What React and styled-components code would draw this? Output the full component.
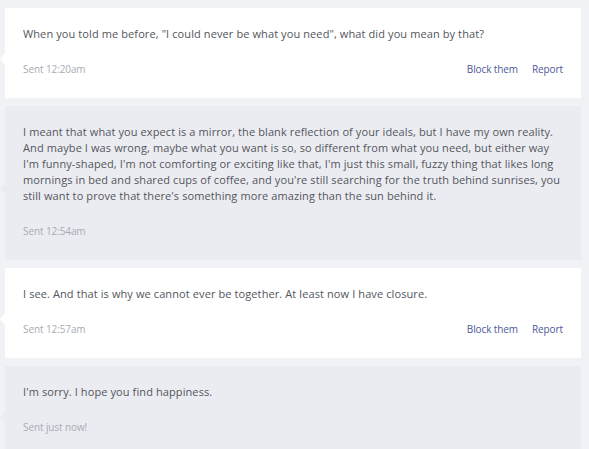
import React from "react";
import styled, { createGlobalStyle } from "styled-components";

const GlobalStyle = createGlobalStyle`
  html, body {
    margin: 0;
    padding: 0;
    background: #f1f2f6;
    font-family: "Open Sans", "Liberation Sans", sans-serif;
  }
`;

const Thread = styled.div`
  display: flex;
  flex-direction: column;
  gap: 8px;
  padding: 8px 8px 0 5px;
`;

const Bubble = styled.div`
  position: relative;
  background-color: ${(props) => (props.mine ? "#ebecf1" : "#ffffff")};
  padding: 18px 18px 21px 18px;
  display: flex;
  flex-direction: column;
  &::before {
    content: "";
    position: absolute;
    left: -5px;
    top: 50%;
    border-top: 6px solid transparent;
    border-bottom: 6px solid transparent;
    border-right: 5px solid ${(props) => (props.mine ? "#ebecf1" : "#ffffff")};
  }
`;

const Text = styled.p`
  margin: 0;
  font-size: 11px;
  line-height: 16px;
  letter-spacing: 0.1px;
  color: #53565c;
`;

const Footer = styled.div`
  margin-top: 19px;
  display: flex;
  align-items: center;
  font-size: 10px;
  line-height: 16px;
`;

const Sent = styled.span`
  color: #a9abb5;
  letter-spacing: -0.1px;
`;

const Actions = styled.div`
  margin-left: auto;
  display: flex;
  gap: 14px;
`;

const Action = styled.a`
  color: #4d5799;
  cursor: pointer;
  letter-spacing: -0.1px;
`;

const messages = [
  {
    text: 'When you told me before, "I could never be what you need", what did you mean by that?',
    sent: "Sent 12:20am",
    mine: false,
  },
  {
    text: "I meant that what you expect is a mirror, the blank reflection of your ideals, but I have my own reality. And maybe I was wrong, maybe what you want is so, so different from what you need, but either way I'm funny-shaped, I'm not comforting or exciting like that, I'm just this small, fuzzy thing that likes long mornings in bed and shared cups of coffee, and you're still searching for the truth behind sunrises, you still want to prove that there's something more amazing than the sun behind it.",
    sent: "Sent 12:54am",
    mine: true,
  },
  {
    text: "I see. And that is why we cannot ever be together. At least now I have closure.",
    sent: "Sent 12:57am",
    mine: false,
  },
  {
    text: "I'm sorry. I hope you find happiness.",
    sent: "Sent just now!",
    mine: true,
  },
];

function App() {
  return (
    <>
      <GlobalStyle />
      <Thread>
        {messages.map((m, index) => (
          <Bubble key={index} mine={m.mine}>
            <Text>{m.text}</Text>
            <Footer>
              <Sent>{m.sent}</Sent>
              {!m.mine && (
                <Actions>
                  <Action>Block them</Action>
                  <Action>Report</Action>
                </Actions>
              )}
            </Footer>
          </Bubble>
        ))}
      </Thread>
    </>
  );
}

export default App;
